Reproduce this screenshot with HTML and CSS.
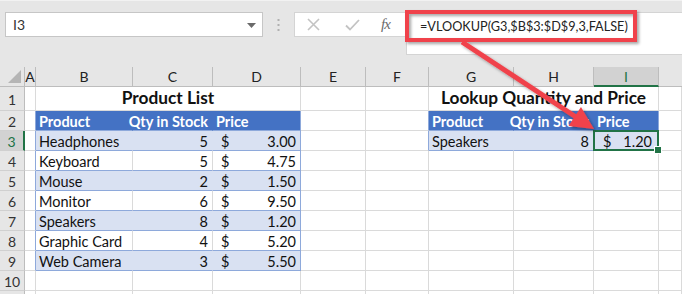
FILE: index.html
```html
<!DOCTYPE html>
<html>
<head>
<meta charset="utf-8">
<link rel="stylesheet" href="styles.css">
</head>
<body>
<div class="app">
  <div class="toolbar">
    <div class="namebox">
      <span>I3</span>
      <svg class="caret" width="9" height="5" viewBox="0 0 9 5"><path d="M0 0H9L4.5 5Z" fill="#6a6a6a"/></svg>
    </div>
    <div class="dots">
      <svg width="3" height="12" viewBox="0 0 3 12"><rect x="0.5" y="0" width="2" height="2" fill="#b0b0b0"/><rect x="0.5" y="5" width="2" height="2" fill="#b0b0b0"/><rect x="0.5" y="10" width="2" height="2" fill="#b0b0b0"/></svg>
    </div>
    <div class="btns">
      <svg class="ico-x" width="13" height="13" viewBox="0 0 13 13"><path d="M1 1L12 12M12 1L1 12" stroke="#c3c3c3" stroke-width="1.6" fill="none"/></svg>
      <svg class="ico-ok" width="15" height="12" viewBox="0 0 15 12"><path d="M1 6.5L5 10.5L14 1" stroke="#c3c3c3" stroke-width="1.8" fill="none"/></svg>
      <span class="fx">fx</span>
    </div>
    <div class="formula">=VLOOKUP(G3,$B$3:$D$9,3,FALSE)</div>
  </div>

  <div class="sheet">
    <!-- column headers -->
    <div class="ch corner"><span class="tri"></span></div>
    <div class="ch">A</div>
    <div class="ch">B</div>
    <div class="ch">C</div>
    <div class="ch">D</div>
    <div class="ch">E</div>
    <div class="ch">F</div>
    <div class="ch">G</div>
    <div class="ch">H</div>
    <div class="ch ch-sel">I</div>
    <div class="ch ch-end"></div>

    <!-- row 1 -->
    <div class="rh">1</div>
    <div class="c"></div>
    <div class="c title span3">Product List</div>
    <div class="c"></div>
    <div class="c"></div>
    <div class="c title span3">Lookup Quantity and Price</div>
    <div class="c"></div>

    <!-- row 2 -->
    <div class="rh">2</div>
    <div class="c tl"></div>
    <div class="c th">Product</div>
    <div class="c th r">Qty in Stock</div>
    <div class="c th tr">Price</div>
    <div class="c"></div>
    <div class="c tl"></div>
    <div class="c th">Product</div>
    <div class="c th r">Qty in Stock</div>
    <div class="c th tr">Price</div>
    <div class="c"></div>

    <!-- row 3 -->
    <div class="rh rh-sel">3</div>
    <div class="c tl"></div>
    <div class="c bd">Headphones</div>
    <div class="c bd r">5</div>
    <div class="c bd tr cur"><span>$</span><span>3.00</span></div>
    <div class="c"></div>
    <div class="c tl"></div>
    <div class="c bd">Speakers</div>
    <div class="c bd r">8</div>
    <div class="c bd tr cur sel"><span>$</span><span>1.20</span></div>
    <div class="c"></div>

    <!-- row 4 -->
    <div class="rh">4</div>
    <div class="c tl"></div>
    <div class="c wt">Keyboard</div>
    <div class="c wt r">5</div>
    <div class="c wt tr cur"><span>$</span><span>4.75</span></div>
    <div class="c"></div>
    <div class="c"></div>
    <div class="c"></div>
    <div class="c"></div>
    <div class="c"></div>
    <div class="c"></div>

    <!-- row 5 -->
    <div class="rh">5</div>
    <div class="c tl"></div>
    <div class="c bd">Mouse</div>
    <div class="c bd r">2</div>
    <div class="c bd tr cur"><span>$</span><span>1.50</span></div>
    <div class="c"></div>
    <div class="c"></div>
    <div class="c"></div>
    <div class="c"></div>
    <div class="c"></div>
    <div class="c"></div>

    <!-- row 6 -->
    <div class="rh">6</div>
    <div class="c tl"></div>
    <div class="c wt">Monitor</div>
    <div class="c wt r">6</div>
    <div class="c wt tr cur"><span>$</span><span>9.50</span></div>
    <div class="c"></div>
    <div class="c"></div>
    <div class="c"></div>
    <div class="c"></div>
    <div class="c"></div>
    <div class="c"></div>

    <!-- row 7 -->
    <div class="rh">7</div>
    <div class="c tl"></div>
    <div class="c bd">Speakers</div>
    <div class="c bd r">8</div>
    <div class="c bd tr cur"><span>$</span><span>1.20</span></div>
    <div class="c"></div>
    <div class="c"></div>
    <div class="c"></div>
    <div class="c"></div>
    <div class="c"></div>
    <div class="c"></div>

    <!-- row 8 -->
    <div class="rh">8</div>
    <div class="c tl"></div>
    <div class="c wt">Graphic Card</div>
    <div class="c wt r">4</div>
    <div class="c wt tr cur"><span>$</span><span>5.20</span></div>
    <div class="c"></div>
    <div class="c"></div>
    <div class="c"></div>
    <div class="c"></div>
    <div class="c"></div>
    <div class="c"></div>

    <!-- row 9 -->
    <div class="rh">9</div>
    <div class="c tl"></div>
    <div class="c bd">Web Camera</div>
    <div class="c bd r">3</div>
    <div class="c bd tr cur"><span>$</span><span>5.50</span></div>
    <div class="c"></div>
    <div class="c"></div>
    <div class="c"></div>
    <div class="c"></div>
    <div class="c"></div>
    <div class="c"></div>

    <!-- row 10 -->
    <div class="rh">10</div>
    <div class="c"></div>
    <div class="c"></div>
    <div class="c"></div>
    <div class="c"></div>
    <div class="c"></div>
    <div class="c"></div>
    <div class="c"></div>
    <div class="c"></div>
    <div class="c"></div>
    <div class="c"></div>

    <!-- row 11 (only its top edge is visible) -->
    <div class="rh"></div>
    <div class="c"></div>
    <div class="c"></div>
    <div class="c"></div>
    <div class="c"></div>
    <div class="c"></div>
    <div class="c"></div>
    <div class="c"></div>
    <div class="c"></div>
    <div class="c"></div>
    <div class="c"></div>
  </div>

  <svg class="annot" width="682" height="294" viewBox="0 0 682 294">
    <defs>
      <filter id="sh" x="-20%" y="-20%" width="140%" height="140%">
        <feDropShadow dx="2" dy="2" stdDeviation="1.6" flood-color="#000" flood-opacity="0.35"/>
      </filter>
    </defs>
    <g filter="url(#sh)">
      <rect x="407" y="12" width="228" height="28" fill="none" stroke="#f0434b" stroke-width="4"/>
      <line x1="462" y1="42" x2="576" y2="117" stroke="#f0434b" stroke-width="5"/>
      <path d="M594 129L568.5 126L581 107Z" fill="#f0434b"/>
    </g>
  </svg>
</div>
</body>
</html>
```

FILE: styles.css
```css
* { box-sizing: border-box; }
html, body { margin: 0; padding: 0; }
body {
  width: 682px;
  height: 294px;
  overflow: hidden;
  background: #e6e6e6;
  font-family: Lato, "Open Sans", sans-serif;
}
.app { position: relative; width: 682px; height: 294px; overflow: hidden; }

.toolbar {
  height: 67px;
  display: flex;
  align-items: flex-start;
  padding-top: 11px;
  background: #e6e6e6;
  border-top: 1px solid #f2f2f2;
}
.namebox {
  margin-left: 5px;
  width: 258px;
  height: 25px;
  background: #fff;
  border: 1px solid #c6c6c6;
  display: flex;
  align-items: center;
  justify-content: space-between;
  padding: 0 6px 0 7px;
  font-size: 14px;
  color: #333;
}
.caret { margin-top: 1px; }
.dots {
  width: 31px;
  height: 25px;
  display: flex;
  align-items: center;
  justify-content: center;
  padding-right: 1px;
}
.btns {
  width: 112px;
  height: 25px;
  background: #fff;
  border: 1px solid #d4d4d4;
  border-right: none;
  display: flex;
  align-items: center;
  padding-left: 12px;
}
.ico-x { margin-right: 25px; }
.ico-ok { margin-right: 21px; }
.fx {
  font-family: "Liberation Serif", serif;
  font-style: italic;
  font-size: 15px;
  color: #6b6b6b;
  letter-spacing: -1px;
}
.formula {
  flex: 1;
  height: 43px;
  background: #fff;
  border: 1px solid #d4d4d4;
  border-right: none;
  padding: 5px 0 0 13px;
  font-size: 12.7px;
  color: #222;
  line-height: 17px;
}

.sheet {
  display: grid;
  grid-template-columns: 25px 11px 97px 80px 88px 65px 63px 85px 80px 65px 1fr;
  grid-template-rows: 20px 24px repeat(9, 20px) 20px;
  background: #fff;
  font-size: 14.5px;
  color: #111;
}
.ch {
  background: #e6e6e6;
  border-right: 1px solid #bdbdbd;
  border-bottom: 1px solid #bdbdbd;
  display: flex;
  align-items: center;
  justify-content: center;
  font-size: 14px;
  color: #222;
}
.ch-end { border-right: none; }
.corner { position: relative; }
.tri {
  position: absolute;
  right: 3px;
  bottom: 3px;
  width: 0; height: 0;
  border-left: 13px solid transparent;
  border-bottom: 13px solid #b5b5b5;
}
.ch-sel {
  background: #d2d2d2;
  border-bottom: 2px solid #217346;
  color: #217346;
}
.rh {
  background: #e6e6e6;
  border-right: 1px solid #bdbdbd;
  border-bottom: 1px solid #d0d0d0;
  display: flex;
  align-items: center;
  justify-content: center;
  font-size: 14px;
  color: #333;
  padding-top: 1px;
}
.rh-sel {
  background: #d2d2d2;
  border-right: 2px solid #217346;
  color: #217346;
}
.c {
  border-right: 1px solid #dadada;
  border-bottom: 1px solid #dadada;
  display: flex;
  align-items: center;
  padding: 1px 3px 0 3px;
  white-space: nowrap;
  overflow: visible;
}
.span3 { grid-column: span 3; }
.title {
  justify-content: center;
  font-weight: 700;
  font-size: 17.3px;
  align-items: flex-end;
  padding-bottom: 2px;
}
.r { justify-content: flex-end; padding-right: 4px; }
.tl { border-right-color: #8ea9db; }
.th {
  background: #4472c4;
  color: #fff;
  font-weight: 700;
  border-right-color: #4472c4;
  border-bottom-color: #8ea9db;
}
.th.tr { border-right-color: #8ea9db; }
.bd {
  background: #d9e1f2;
  border-right-color: #d9e1f2;
  border-bottom-color: #8ea9db;
}
.wt { border-bottom-color: #8ea9db; }
.tr { border-right-color: #8ea9db; }
.cur { justify-content: space-between; padding-left: 8px; padding-right: 4px; }
.sel { position: relative; padding-left: 9px; padding-right: 6px; }
.sel::before {
  content: "";
  position: absolute;
  left: -1px; top: -1px; right: -1px; bottom: -1px;
  border: 2px solid #217346;
}
.sel::after {
  content: "";
  position: absolute;
  right: -4px; bottom: -4px;
  width: 6px; height: 6px;
  background: #217346;
  border: 1px solid #fff;
}

.annot { position: absolute; left: 0; top: 0; pointer-events: none; }
```
